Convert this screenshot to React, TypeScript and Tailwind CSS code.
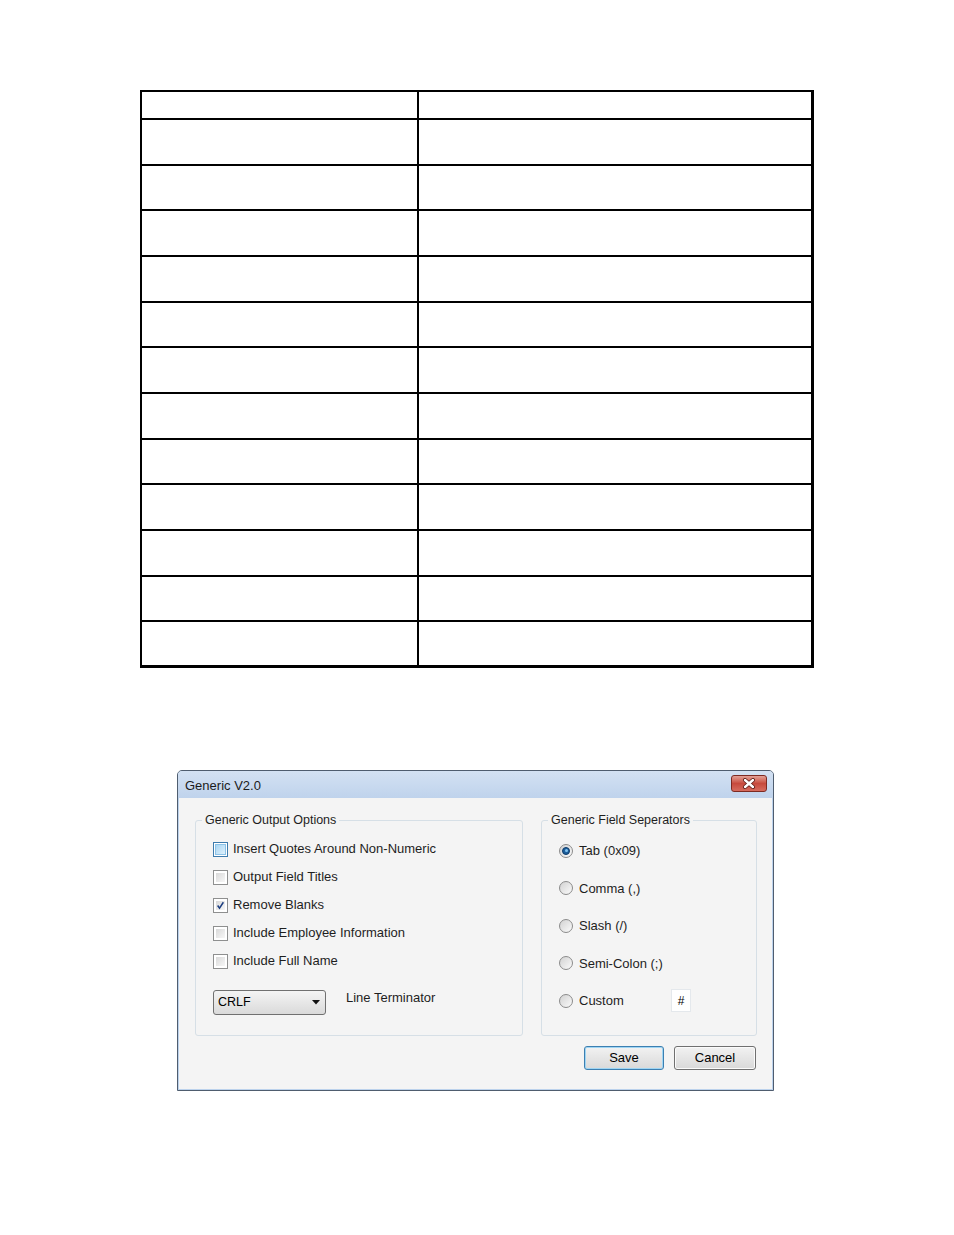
import React from 'react';

const rowHeights = [44, 43, 44, 44, 43, 44, 44, 43, 44, 44, 43, 43];

const checks = [
  { label: 'Insert Quotes Around Non-Numeric', state: 'focus' },
  { label: 'Output Field Titles', state: 'off' },
  { label: 'Remove Blanks', state: 'on' },
  { label: 'Include Employee Information', state: 'off' },
  { label: 'Include Full Name', state: 'off' },
];

const radios = ['Tab (0x09)', 'Comma (,)', 'Slash (/)', 'Semi-Colon (;)'];

const CheckBox: React.FC<{ state: string }> = ({ state }) => {
  if (state === 'focus') {
    return (
      <div className="w-[15px] h-[15px] border border-[#3d7bad] p-[1px] bg-white">
        <div className="w-full h-full bg-gradient-to-br from-[#a9d6f3] to-[#def0fb] border border-[#8cc3e8]" />
      </div>
    );
  }
  return (
    <div className="w-[15px] h-[15px] border border-[#8e8f8f] p-[2px] bg-white">
      <div className="w-full h-full bg-gradient-to-br from-[#d9d9d9] to-[#f7f7f7] flex items-center justify-center">
        {state === 'on' && (
          <svg width="11" height="11" viewBox="0 0 11 11">
            <path d="M2 5.5 L4.3 8.8 L9 1.5" fill="none" stroke="#1b3d80" strokeWidth="1.8" />
          </svg>
        )}
      </div>
    </div>
  );
};

const Radio: React.FC<{ on: boolean }> = ({ on }) => (
  <div className="w-[14px] h-[14px] rounded-full border border-[#8b8b8b] bg-gradient-to-br from-[#d2d2d2] to-[#fbfbfb] flex items-center justify-center">
    {on && (
      <div className="w-[8px] h-[8px] rounded-full bg-[#1d5f9c] border border-[#0f3c6b] flex items-center justify-center">
        <div className="w-[3px] h-[3px] rounded-full bg-[#7fc1ef]" />
      </div>
    )}
  </div>
);

export default function App() {
  return (
    <div className="w-[954px] h-[1235px] bg-white font-['Liberation_Sans',Arial,sans-serif] overflow-hidden">
      {/* empty table */}
      <div className="mt-[90px] ml-[140px] w-[674px] border-t-2 border-l-2 border-r-[3px] border-b-[3px] border-black flex flex-col">
        <div className="flex h-[28px] border-b-2 border-black">
          <div className="w-[277px] border-r-2 border-black" />
          <div className="flex-1" />
        </div>
        {rowHeights.map((h, i) => (
          <div
            key={i}
            className={`flex ${i < rowHeights.length - 1 ? 'border-b-2 border-black' : ''}`}
            style={{ height: h + (i < rowHeights.length - 1 ? 2 : 0) }}
          >
            <div className="w-[277px] border-r-2 border-black" />
            <div className="flex-1" />
          </div>
        ))}
      </div>

      {/* dialog */}
      <div className="mt-[102px] ml-[177px] w-[597px] h-[321px] border border-[#4f5d6f] rounded-t-[5px] flex flex-col bg-[#bcd2ec]">
        <div className="h-[27px] flex items-start justify-between pl-[7px] pr-[6px] bg-gradient-to-b from-[#d3e1f3] to-[#bfd3ec] rounded-t-[4px]">
          <span className="mt-[5px] text-[13px] text-[#1b1b1b]">Generic V2.0</span>
          <div className="mt-[4px] w-[36px] h-[17px] rounded-[3px] border border-[#7d2a22] bg-gradient-to-b from-[#e2a097] via-[#c74a3d] to-[#d66b5e] flex items-center justify-center">
            <svg width="14" height="11" viewBox="0 0 14 11">
              <path d="M3 2 L11 9 M11 2 L3 9" stroke="#5a1a14" strokeWidth="4" strokeLinecap="round" />
              <path d="M3 2 L11 9 M11 2 L3 9" stroke="#ffffff" strokeWidth="2.4" strokeLinecap="round" />
            </svg>
          </div>
        </div>
        <div className="flex-1 mx-[1px] mb-[1px] bg-[#f4f4f4] flex flex-col pt-[15px] pl-[16px] pr-[15px] text-[#1e1e1e]">
          <div className="flex gap-[18px]">
            <fieldset className="w-[328px] border border-[#d6dfe6] rounded-[3px] pl-[17px] pt-[7px] pb-[20px]">
              <legend className="ml-[-11px] px-[3px] text-[12.5px] leading-[15px]">Generic Output Options</legend>
              {checks.map((c) => (
                <div key={c.label} className="h-[28px] flex items-center gap-[5px]">
                  <CheckBox state={c.state} />
                  <span className="text-[13px]">{c.label}</span>
                </div>
              ))}
              <div className="mt-[15px] flex items-start gap-[20px]">
                <div className="w-[113px] h-[25px] rounded-[3px] border border-[#707070] bg-gradient-to-b from-[#f4f4f4] to-[#dadada] flex items-center justify-between pl-[4px] pr-[5px]">
                  <span className="text-[12.5px] text-black">CRLF</span>
                  <svg width="8" height="5" viewBox="0 0 8 5">
                    <path d="M0 0 L8 0 L4 4.5 Z" fill="#111" />
                  </svg>
                </div>
                <span className="text-[13px] leading-[15px]">Line Terminator</span>
              </div>
            </fieldset>
            <fieldset className="flex-1 border border-[#d6dfe6] rounded-[3px] pl-[17px] pt-[4px]">
              <legend className="ml-[-11px] px-[3px] text-[12.5px] leading-[15px]">Generic Field Seperators</legend>
              {radios.map((r, i) => (
                <div key={r} className="h-[37.5px] flex items-center gap-[6px]">
                  <Radio on={i === 0} />
                  <span className="text-[13px]">{r}</span>
                </div>
              ))}
              <div className="h-[37.5px] flex items-center gap-[6px]">
                <Radio on={false} />
                <span className="w-[86px] text-[13px]">Custom</span>
                <div className="w-[20px] h-[23px] bg-white border border-[#e4e8ec] flex items-center justify-center text-[12px] text-black">
                  #
                </div>
              </div>
            </fieldset>
          </div>
          <div className="mt-[10px] flex justify-end gap-[10px] pr-[1px]">
            <div className="w-[80px] h-[24px] rounded-[3px] border border-[#3c7fb1] bg-gradient-to-b from-[#f2f2f2] to-[#d9d9d9] shadow-[inset_0_0_0_1px_#9fd5f3] flex items-center justify-center text-[13px] text-black">
              Save
            </div>
            <div className="w-[82px] h-[24px] rounded-[3px] border border-[#707070] bg-gradient-to-b from-[#f2f2f2] to-[#d9d9d9] shadow-[inset_0_0_0_1px_#fbfbfb] flex items-center justify-center text-[13px] text-black">
              Cancel
            </div>
          </div>
        </div>
      </div>
    </div>
  );
}
